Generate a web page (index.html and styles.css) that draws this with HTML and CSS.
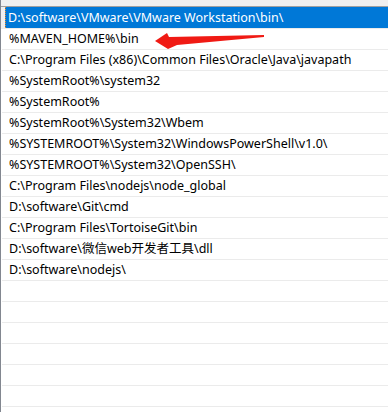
FILE: index.html
```html
<!DOCTYPE html>
<html>
<head>
<meta charset="utf-8">
<link rel="stylesheet" href="styles.css">
</head>
<body>
<div class="list">
  <div class="top-strip"></div>
  <div class="sel-wrap">
    <div class="row selected">D:\software\VMware\VMware Workstation\bin\</div>
  </div>
  <div class="row">%MAVEN_HOME%\bin</div>
  <div class="row">C:\Program Files (x86)\Common Files\Oracle\Java\javapath</div>
  <div class="row">%SystemRoot%\system32</div>
  <div class="row">%SystemRoot%</div>
  <div class="row">%SystemRoot%\System32\Wbem</div>
  <div class="row">%SYSTEMROOT%\System32\WindowsPowerShell\v1.0\</div>
  <div class="row">%SYSTEMROOT%\System32\OpenSSH\</div>
  <div class="row">C:\Program Files\nodejs\node_global</div>
  <div class="row">D:\software\Git\cmd</div>
  <div class="row">C:\Program Files\TortoiseGit\bin</div>
  <div class="row">D:\software\微信web开发者工具\dll</div>
  <div class="row">D:\software\nodejs\</div>
  <div class="row"></div>
  <div class="row"></div>
  <div class="row"></div>
  <div class="row"></div>
  <div class="row"></div>
  <div class="row"></div>
  <div class="row"></div>
  <svg class="arrow" width="388" height="60" viewBox="0 0 388 60">
    <polygon points="154,41 166,33 168,37 263,35 263,37 176,45 167,49" fill="#f01a14"/>
  </svg>
</div>
</body>
</html>
```
FILE: styles.css
```css
html, body {
  margin: 0;
  padding: 0;
  background: #ffffff;
}
.list {
  position: relative;
  width: 387px;
  height: 412px;
  overflow: hidden;
  border-left: 1px solid #828790;
  background: #ffffff;
  font-family: "Noto Sans", "Noto Sans CJK SC", sans-serif;
  font-size: 12.5px;
  color: #000000;
}
.top-strip {
  height: 6px;
  background: #f0f0f0;
  border-bottom: 1px solid #a0a0a0;
}
.sel-wrap {
  background: #f0f0f0;
  padding-left: 4px;
  border-bottom: 1px solid #ebebeb;
}
.row {
  height: 20px;
  line-height: 20px;
  padding-left: 7px;
  margin-left: 1px;
  border-bottom: 1px solid #ebebeb;
  white-space: nowrap;
}
.selected {
  margin-left: 0;
  padding-left: 2px;
  height: 21px;
  line-height: 21px;
  background: #0078d7;
  color: #ffffff;
  border-left: 1px dotted #f08c28;
  border-bottom: none;
}
.arrow {
  position: absolute;
  left: 0;
  top: 0;
}
```
